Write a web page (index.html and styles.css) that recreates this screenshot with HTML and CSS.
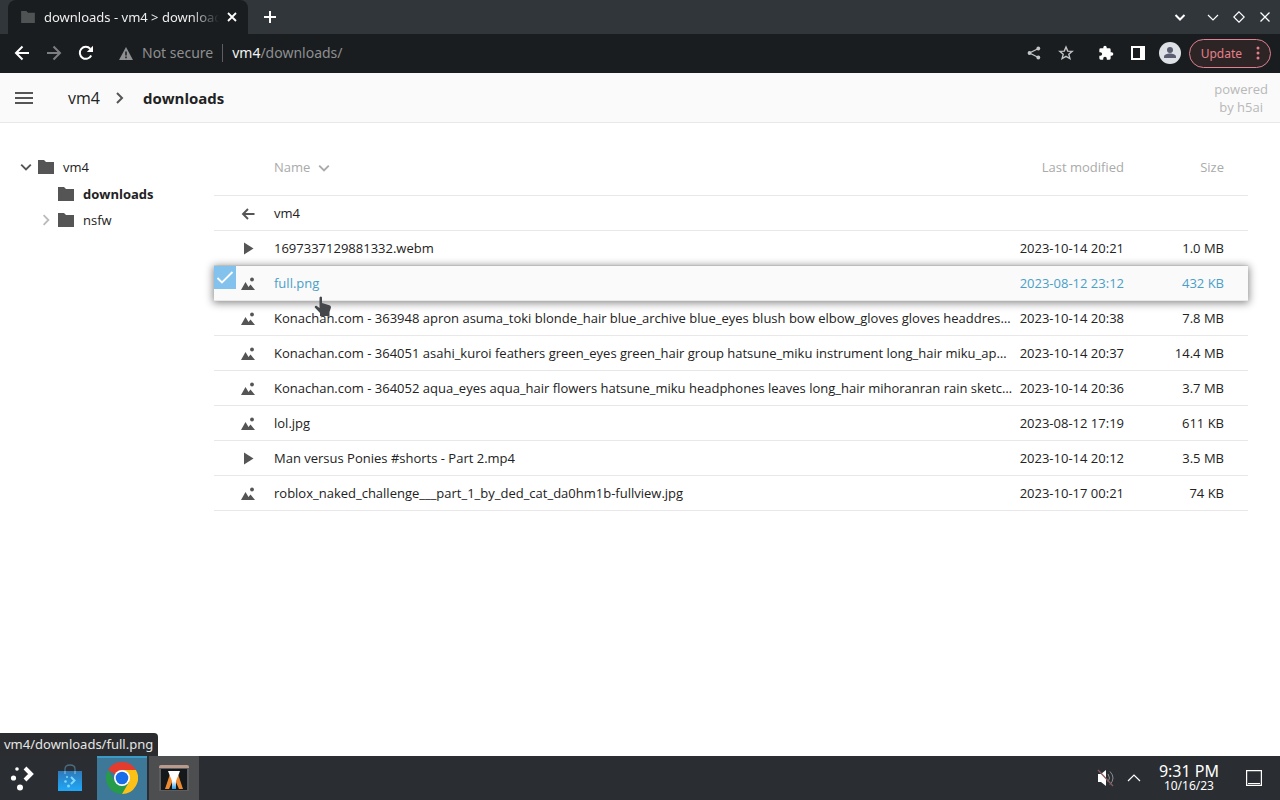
FILE: index.html
```html
<!DOCTYPE html>
<html lang="en">
<head>
<meta charset="utf-8">
<title>downloads - vm4 &gt; downloads</title>
<link rel="stylesheet" href="styles.css">
</head>
<body>
<svg class="sprite" aria-hidden="true">
  <symbol id="folder" viewBox="0 0 16 14"><path d="M0 0h6l2 2h8v12H0z"/></symbol>
  <symbol id="image" viewBox="0 0 14 14"><circle cx="11" cy="3.500" r="1.900"/><path d="M0 14l4.500-8 3 5L9.500 8.500 14 14z"/></symbol>
  <symbol id="play" viewBox="0 0 14 14"><path d="M3 1.500v12l9.500-6z"/></symbol>
  <symbol id="back" viewBox="0 0 14 14"><path d="M13.500 8H2.500M7 3L2 8l5 5" fill="none" stroke="currentColor" stroke-width="1.900"/></symbol>
  <symbol id="down" viewBox="0 0 10 10"><path d="M1 3l4 4 4-4" fill="none" stroke="currentColor" stroke-width="1.600"/></symbol>
  <symbol id="right" viewBox="0 0 10 10"><path d="M3 1l4 4-4 4" fill="none" stroke="currentColor" stroke-width="1.500"/></symbol>
</svg>

<header class="tabstrip">
  <div class="tab">
    <svg class="tab-icon"><use href="#folder"/></svg>
    <span class="tab-title">downloads - vm4 &gt; downloads</span>
    <button class="icon-btn tab-close" aria-label="Close tab"><svg width="10" height="10" viewBox="0 0 10 10"><path d="M1 1l8 8M9 1L1 9" stroke="currentColor" stroke-width="1.800"/></svg></button>
  </div>
  <button class="icon-btn new-tab" aria-label="New tab"><svg width="12" height="12" viewBox="0 0 12 12"><path d="M6 0v12M0 6h12" stroke="currentColor" stroke-width="2"/></svg></button>
  <div class="window-controls">
    <button class="icon-btn search-tabs" aria-label="Search tabs"><svg width="12" height="12" viewBox="0 0 12 12"><path d="M1.500 4L6 8.500 10.500 4" fill="none" stroke="currentColor" stroke-width="2"/></svg></button>
    <button class="icon-btn" aria-label="Minimize"><svg width="12" height="12" viewBox="0 0 12 12"><path d="M1 4l5 5 5-5" fill="none" stroke="currentColor" stroke-width="1.200"/></svg></button>
    <button class="icon-btn" aria-label="Maximize"><svg width="12" height="12" viewBox="0 0 12 12"><path d="M6 .800L11.200 6 6 11.200.800 6z" fill="none" stroke="currentColor" stroke-width="1.200"/></svg></button>
    <button class="icon-btn" aria-label="Close window"><svg width="12" height="12" viewBox="0 0 12 12"><path d="M1.500 1.500l9 9M10.500 1.500l-9 9" stroke="currentColor" stroke-width="1.300"/></svg></button>
  </div>
</header>

<nav class="toolbar">
  <button class="icon-btn" aria-label="Back"><svg width="16" height="16" viewBox="0 0 16 16"><path d="M15 8H2M8.500 1.500L2 8l6.500 6.500" fill="none" stroke="currentColor" stroke-width="2"/></svg></button>
  <button class="icon-btn dim" aria-label="Forward"><svg width="16" height="16" viewBox="0 0 16 16"><path d="M1 8h13M7.500 1.500L14 8l-6.500 6.500" fill="none" stroke="currentColor" stroke-width="2"/></svg></button>
  <button class="icon-btn" aria-label="Reload"><svg width="16" height="16" viewBox="0 0 16 16"><path d="M13.200 10.500A6 6 0 1 1 12.300 3.800" fill="none" stroke="currentColor" stroke-width="2"/><path d="M15 .800V7H8.800z" fill="currentColor"/></svg></button>
  <div class="address">
    <svg class="warn" width="14" height="13" viewBox="0 0 14 13"><path d="M7 0l7 13H0z" fill="currentColor"/><path d="M7 4.500v4M7 9.500v1.700" stroke="#1a1d1f" stroke-width="1.500"/></svg>
    <span class="secure">Not secure</span>
    <span class="url"><b>vm4</b>/downloads/</span>
  </div>
  <div class="actions">
    <button class="icon-btn soft" aria-label="Share"><svg width="14" height="14" viewBox="0 0 14 14"><path d="M11.500 2.500L2.500 7l9 4.500" fill="none" stroke="currentColor" stroke-width="1.300"/><g fill="currentColor"><circle cx="11.300" cy="2.500" r="1.900"/><circle cx="2.500" cy="7" r="1.900"/><circle cx="11.300" cy="11.500" r="1.900"/></g></svg></button>
    <button class="icon-btn soft" aria-label="Bookmark"><svg width="16" height="16" viewBox="0 0 16 16"><path d="M8 2l1.700 4.100 4.500.300-3.400 2.900 1.100 4.300L8 11.300l-3.900 2.300 1.100-4.300-3.400-2.900 4.500-.300z" fill="none" stroke="currentColor" stroke-width="1.400"/></svg></button>
    <button class="icon-btn ext" aria-label="Extensions"><svg width="16" height="16" viewBox="0 0 24 24"><path fill="currentColor" d="M20.500 11H19V7a2 2 0 0 0-2-2h-4V3.500a2.500 2.500 0 0 0-5 0V5H4a2 2 0 0 0-2 2v3.800h1.500a2.700 2.700 0 0 1 0 5.400H2V20a2 2 0 0 0 2 2h3.800v-1.500a2.700 2.700 0 0 1 5.400 0V22H17a2 2 0 0 0 2-2v-4h1.500a2.500 2.500 0 0 0 0-5z"/></svg></button>
    <button class="icon-btn" aria-label="Side panel"><svg width="14" height="14" viewBox="0 0 14 14"><path fill="currentColor" fill-rule="evenodd" d="M0 0h14v14H0zM2 2v10h7V2z"/></svg></button>
    <button class="icon-btn profile" aria-label="Profile"><svg width="22" height="22" viewBox="0 0 22 22"><circle cx="11" cy="11" r="11" fill="#dee1e6"/><circle cx="11" cy="8" r="3" fill="#5a5e70"/><path d="M5 16v-1.500c0-2 3.500-3 6-3s6 1 6 3V16z" fill="#5a5e70"/></svg></button>
    <button class="update">Update<svg width="4" height="14" viewBox="0 0 4 14"><g fill="currentColor"><circle cx="2" cy="2" r="1.500"/><circle cx="2" cy="7" r="1.500"/><circle cx="2" cy="12" r="1.500"/></g></svg></button>
  </div>
</nav>

<div class="page">
  <header class="topbar">
    <button class="icon-btn menu" aria-label="Menu"><svg width="18" height="12" viewBox="0 0 18 12"><path d="M0 1h18M0 6h18M0 11h18" stroke="currentColor" stroke-width="2"/></svg></button>
    <a class="crumb" href="#">vm4</a>
    <svg class="crumb-sep" width="14" height="14" viewBox="0 0 14 14"><path d="M4 2l5 5-5 5" fill="none" stroke="currentColor" stroke-width="2"/></svg>
    <a class="crumb current" href="#">downloads</a>
    <a class="powered" href="#">powered<br>by h5ai</a>
  </header>
  <div class="content">
    <aside class="tree">
      <a class="node root" href="#"><svg class="arrow"><use href="#down"/></svg><svg class="folder"><use href="#folder"/></svg>vm4</a>
      <a class="node current" href="#"><span class="arrow"></span><svg class="folder"><use href="#folder"/></svg>downloads</a>
      <a class="node" href="#"><svg class="arrow faint"><use href="#right"/></svg><svg class="folder"><use href="#folder"/></svg>nsfw</a>
    </aside>
    <main class="listing">
      <table class="files">
        <thead>
          <tr><th class="type"></th><th class="name">Name<svg class="sort"><use href="#down"/></svg></th><th class="date">Last modified</th><th class="size">Size</th></tr>
        </thead>
        <tbody>
          <tr><td class="type"><svg><use href="#back"/></svg></td><td class="name"><a href="#">vm4</a></td><td class="date"></td><td class="size"></td></tr>
          <tr><td class="type"><svg><use href="#play"/></svg></td><td class="name"><a href="#">1697337129881332.webm</a></td><td class="date">2023-10-14 20:21</td><td class="size">1.0 MB</td></tr>
          <tr class="selected"><td class="type"><label class="check"><input type="checkbox" checked aria-label="Select full.png"><svg class="tick" viewBox="0 0 22 22"><path d="M3.500 12l4.500 4.500L18.500 6" fill="none" stroke="#fff" stroke-width="1.800"/></svg></label><svg><use href="#image"/></svg></td><td class="name"><a href="#">full.png</a><svg class="pointer" viewBox="0 0 18 20"><path d="M5.500 1.500Q7 -.500 8 1.500V7l7.500 2.200Q17 9.800 17 11.500L15.500 16v4H6v-3L.800 11.500Q.500 9.500 2.500 9.800L5.500 12z" fill="#45484b"/></svg></td><td class="date">2023-08-12 23:12</td><td class="size">432 KB</td></tr>
          <tr><td class="type"><svg><use href="#image"/></svg></td><td class="name"><a href="#">Konachan.com - 363948 apron asuma_toki blonde_hair blue_archive blue_eyes blush bow elbow_gloves gloves headdres…</a></td><td class="date">2023-10-14 20:38</td><td class="size">7.8 MB</td></tr>
          <tr><td class="type"><svg><use href="#image"/></svg></td><td class="name"><a href="#">Konachan.com - 364051 asahi_kuroi feathers green_eyes green_hair group hatsune_miku instrument long_hair miku_ap…</a></td><td class="date">2023-10-14 20:37</td><td class="size">14.4 MB</td></tr>
          <tr><td class="type"><svg><use href="#image"/></svg></td><td class="name"><a href="#">Konachan.com - 364052 aqua_eyes aqua_hair flowers hatsune_miku headphones leaves long_hair mihoranran rain sketc…</a></td><td class="date">2023-10-14 20:36</td><td class="size">3.7 MB</td></tr>
          <tr><td class="type"><svg><use href="#image"/></svg></td><td class="name"><a href="#">lol.jpg</a></td><td class="date">2023-08-12 17:19</td><td class="size">611 KB</td></tr>
          <tr><td class="type"><svg><use href="#play"/></svg></td><td class="name"><a href="#">Man versus Ponies #shorts - Part 2.mp4</a></td><td class="date">2023-10-14 20:12</td><td class="size">3.5 MB</td></tr>
          <tr><td class="type"><svg><use href="#image"/></svg></td><td class="name"><a href="#">roblox_naked_challenge___part_1_by_ded_cat_da0hm1b-fullview.jpg</a></td><td class="date">2023-10-17 00:21</td><td class="size">74 KB</td></tr>
        </tbody>
      </table>
    </main>
  </div>
  <div class="status">vm4/downloads/full.png</div>
</div>

<footer class="taskbar">
  <button class="task launcher" aria-label="Application launcher"><svg width="28" height="28" viewBox="0 0 28 28"><g fill="#fff"><circle cx="9" cy="5" r="1.800"/><circle cx="5.500" cy="14" r="2.600"/><circle cx="12" cy="23.500" r="3"/></g><path d="M17 4l6 6-6 6" fill="none" stroke="#fff" stroke-width="4"/></svg></button>
  <button class="task" aria-label="Software center"><svg width="26" height="28" viewBox="0 0 26 28"><defs><linearGradient id="bag" x2="0" y2="1"><stop stop-color="#2e79b8"/><stop offset="1" stop-color="#20a8f8"/></linearGradient></defs><path d="M8 9V5q0-4 5-4t5 4v4" fill="none" stroke="#4c6c80" stroke-width="1.300"/><path d="M1 7h24v20H1z" fill="url(#bag)"/><path d="M8 7v3M18 7v3" stroke="#8cc6ee"/><path d="M14 13l3.500 3.500L14 20" fill="none" stroke="#7dd8ff" stroke-width="2"/><g fill="#7dd8ff"><circle cx="10" cy="13" r="1"/><circle cx="8.500" cy="17.500" r="1.300"/><circle cx="11.500" cy="22" r="1.500"/></g></svg></button>
  <button class="task active" aria-label="Google Chrome"><svg width="32" height="32" viewBox="0 0 32 32"><path d="M16 16L2.140 8A16 16 0 0 1 29.860 8z" fill="#e33b2e"/><path d="M2.140 8A16 16 0 0 0 16 32l7-12-7-4-7 4z" fill="#269b49"/><path d="M16 8h13.860A16 16 0 0 1 16 32l7-12z" fill="#fbc116"/><circle cx="16" cy="16" r="8" fill="#fff"/><circle cx="16" cy="16" r="6.300" fill="#1a6ce8"/></svg></button>
  <button class="task open" aria-label="Media editor"><svg width="32" height="28" viewBox="0 0 32 28"><defs><linearGradient id="beam" x2="0" y2="1"><stop stop-color="#fff"/><stop offset=".55" stop-color="#fff"/><stop offset="1" stop-color="#239be8"/></linearGradient></defs><path d="M1 3q0-2 2-2h26q2 0 2 2v24H1z" fill="#5d5c5e"/><path d="M1 4V3q0-2 2-2h26q2 0 2 2v1z" fill="#b99b8e"/><path d="M3 5h26v21H3z" fill="#15181b"/><path d="M12 10L7 25h4l4-9zM20 10l5 15h-4l-4-9z" fill="#ed8a30"/><path d="M10 7h12l-4 10v8h-4v-8z" fill="url(#beam)"/></svg></button>
  <div class="tray">
    <button class="icon-btn" aria-label="Volume muted"><svg width="18" height="18" viewBox="0 0 18 18"><path d="M1 5h3l5-4v16l-5-4H1z" fill="#fff"/><path d="M11 5q3 4 0 8M13 2.500q6 6.500 0 13" fill="none" stroke="#8d8d8f"/><path d="M1 1l15 16" stroke="#865b60" stroke-width="1.300"/></svg></button>
    <button class="icon-btn" aria-label="Show hidden icons"><svg width="14" height="8" viewBox="0 0 14 8"><path d="M1 7l6-6 6 6" fill="none" stroke="currentColor" stroke-width="1.200"/></svg></button>
    <div class="clock"><span class="time">9:31 PM</span><span class="day">10/16/23</span></div>
    <button class="icon-btn" aria-label="Show desktop"><svg width="16" height="16" viewBox="0 0 16 16"><path d="M.600.600h14.800v14.800H.600zM2 13.500h12" fill="none" stroke="currentColor" stroke-width="1.200"/></svg></button>
  </div>
</footer>
</body>
</html>
```
FILE: styles.css
```css
* { box-sizing: border-box; }
body {
  margin: 0;
  min-height: 100vh;
  display: flex;
  flex-direction: column;
  background: #fff;
  color: #222;
  font-family: "Noto Sans", "Open Sans", sans-serif;
  font-size: 13px;
}
a { color: inherit; text-decoration: none; }
button { font: inherit; }
svg { display: block; flex: none; fill: currentColor; }
.sprite { position: absolute; width: 0; height: 0; }
.icon-btn {
  display: flex;
  align-items: center;
  justify-content: center;
  padding: 0;
  border: 0;
  background: none;
  color: #fff;
}

.tabstrip {
  display: flex;
  height: 34px;
  padding-left: 8px;
  background: #31363b;
}
.tab {
  display: flex;
  align-items: center;
  width: 240px;
  padding: 0 9px 0 13px;
  border-radius: 8px 8px 0 0;
  background: #1a1d1f;
  color: #eee;
}
.tab-icon { width: 14px; height: 12px; margin-right: 9px; color: #505354; }
.tab-title {
  flex: 1;
  overflow: hidden;
  white-space: nowrap;
  mask-image: linear-gradient(to right, #000 84%, transparent);
}
.tab-close { width: 14px; margin-left: 6px; }
.new-tab { width: 44px; }
.window-controls { display: flex; align-items: center; gap: 14px; margin-left: auto; padding-right: 9px; }
.search-tabs { margin-right: 7px; }

.toolbar {
  display: flex;
  align-items: center;
  gap: 16px;
  height: 39px;
  padding: 0 9px 1px 14px;
  background: #1a1d1f;
  font-size: 14px;
}
.dim { color: #7c7e80; }
.soft { color: #c4c5c6; }
.address { display: flex; align-items: center; margin-left: 9px; color: #8d8f91; }
.warn { margin-right: 9px; }
.secure { padding-right: 9px; margin-right: 9px; border-right: 1px solid #5c5e60; line-height: 18px; }
.url { line-height: 18px; }
.url b { font-weight: 400; color: #f2f2f2; }
.actions { display: flex; align-items: center; gap: 17px; margin-left: auto; }
.ext { margin-left: 7px; }
.profile { margin-left: -3px; }
.update {
  display: flex;
  align-items: center;
  gap: 14px;
  height: 29px;
  margin-left: -9px;
  padding: 0 10px 0 11px;
  border: 1px solid #e08090;
  border-radius: 15px;
  background: #2d2426;
  color: #e58088;
  font-size: 12px;
}

.page { position: relative; flex: 1; font-family: "Open Sans", "Noto Sans", sans-serif; }
.topbar {
  display: flex;
  align-items: center;
  height: 50px;
  padding: 0 12px 0 15px;
  border-bottom: 1px solid #e8e8e8;
  background: #fafafa;
  font-size: 16px;
}
.menu { margin-right: 35px; color: #555; }
.crumb-sep { margin: 0 16px 0 13px; color: #555; }
.current { font-weight: 700; }
.crumb.current { font-size: 15px; }
.powered { margin-left: auto; color: #b8b8b8; font-size: 13px; line-height: 18px; text-align: center; }
.content { display: flex; padding: 17px 32px 0 20px; }
.tree { width: 194px; padding-top: 14px; }
.node { display: flex; align-items: center; height: 26px; padding-left: 20px; }
.root { margin-bottom: 1px; padding-left: 0; }
.arrow { width: 12px; height: 12px; margin-right: 6px; color: #555; }
.faint { color: #bbb; }
.folder { width: 16px; height: 14px; margin-right: 9px; color: #555; }

.listing { flex: 1; min-width: 0; }
.files { width: 100%; table-layout: fixed; border-collapse: separate; border-spacing: 0; }
.files th, .files td {
  height: 35px;
  padding: 0;
  border-bottom: 1px solid #e8e8e8;
  text-align: left;
  font-weight: 400;
  line-height: 18px;
  white-space: nowrap;
}
.files th { height: 56px; padding-bottom: 2px; color: #aaa; }
.files .type { width: 60px; padding-left: 27px; }
.type > svg { width: 14px; height: 14px; color: #555; }
.sort { display: inline-block; width: 12px; height: 12px; margin-left: 8px; vertical-align: -2px; }
.files .date { width: 130px; text-align: right; }
.files .size { width: 124px; padding-right: 24px; text-align: right; }
.selected { position: relative; background: #fafafa; color: #4a9fc8; box-shadow: 0 1px 8px 1px #888; }
.selected td { position: relative; }
.check { position: absolute; top: 0; left: 0; width: 22px; height: 23px; }
.check input { appearance: none; display: block; width: 100%; height: 100%; margin: 0; background: #84c2ee; }
.tick { position: absolute; top: 0; left: 0; width: 22px; height: 22px; }
.pointer { position: absolute; z-index: 2; left: 40px; top: 30px; width: 18px; height: 20px; }

.status {
  position: absolute;
  left: 0;
  bottom: 0;
  height: 23px;
  padding: 0 5px 0 4px;
  border-radius: 0 4px 0 0;
  background: #2a2c2f;
  color: #e6e6e6;
  font-family: "Noto Sans", sans-serif;
  line-height: 22px;
}

.taskbar { display: flex; height: 44px; background: #2a2e32; color: #fff; }
.task {
  display: flex;
  align-items: center;
  justify-content: center;
  width: 50px;
  margin-right: 2px;
  padding: 0;
  border: 0;
  background: none;
}
.launcher { width: 43px; }
.active { background: #3d7898; box-shadow: inset 0 2px #3b9bc7; }
.open { background: #4c4e50; }
.tray { display: flex; align-items: center; gap: 14px; margin-left: auto; padding-right: 18px; }
.clock { display: flex; flex-direction: column; align-items: center; margin: 0 13px 0 4px; }
.time { font-size: 16px; line-height: 16px; }
.day { font-size: 12px; line-height: 14px; }
.tray .icon-btn:first-child { margin-right: -2px; }
```
